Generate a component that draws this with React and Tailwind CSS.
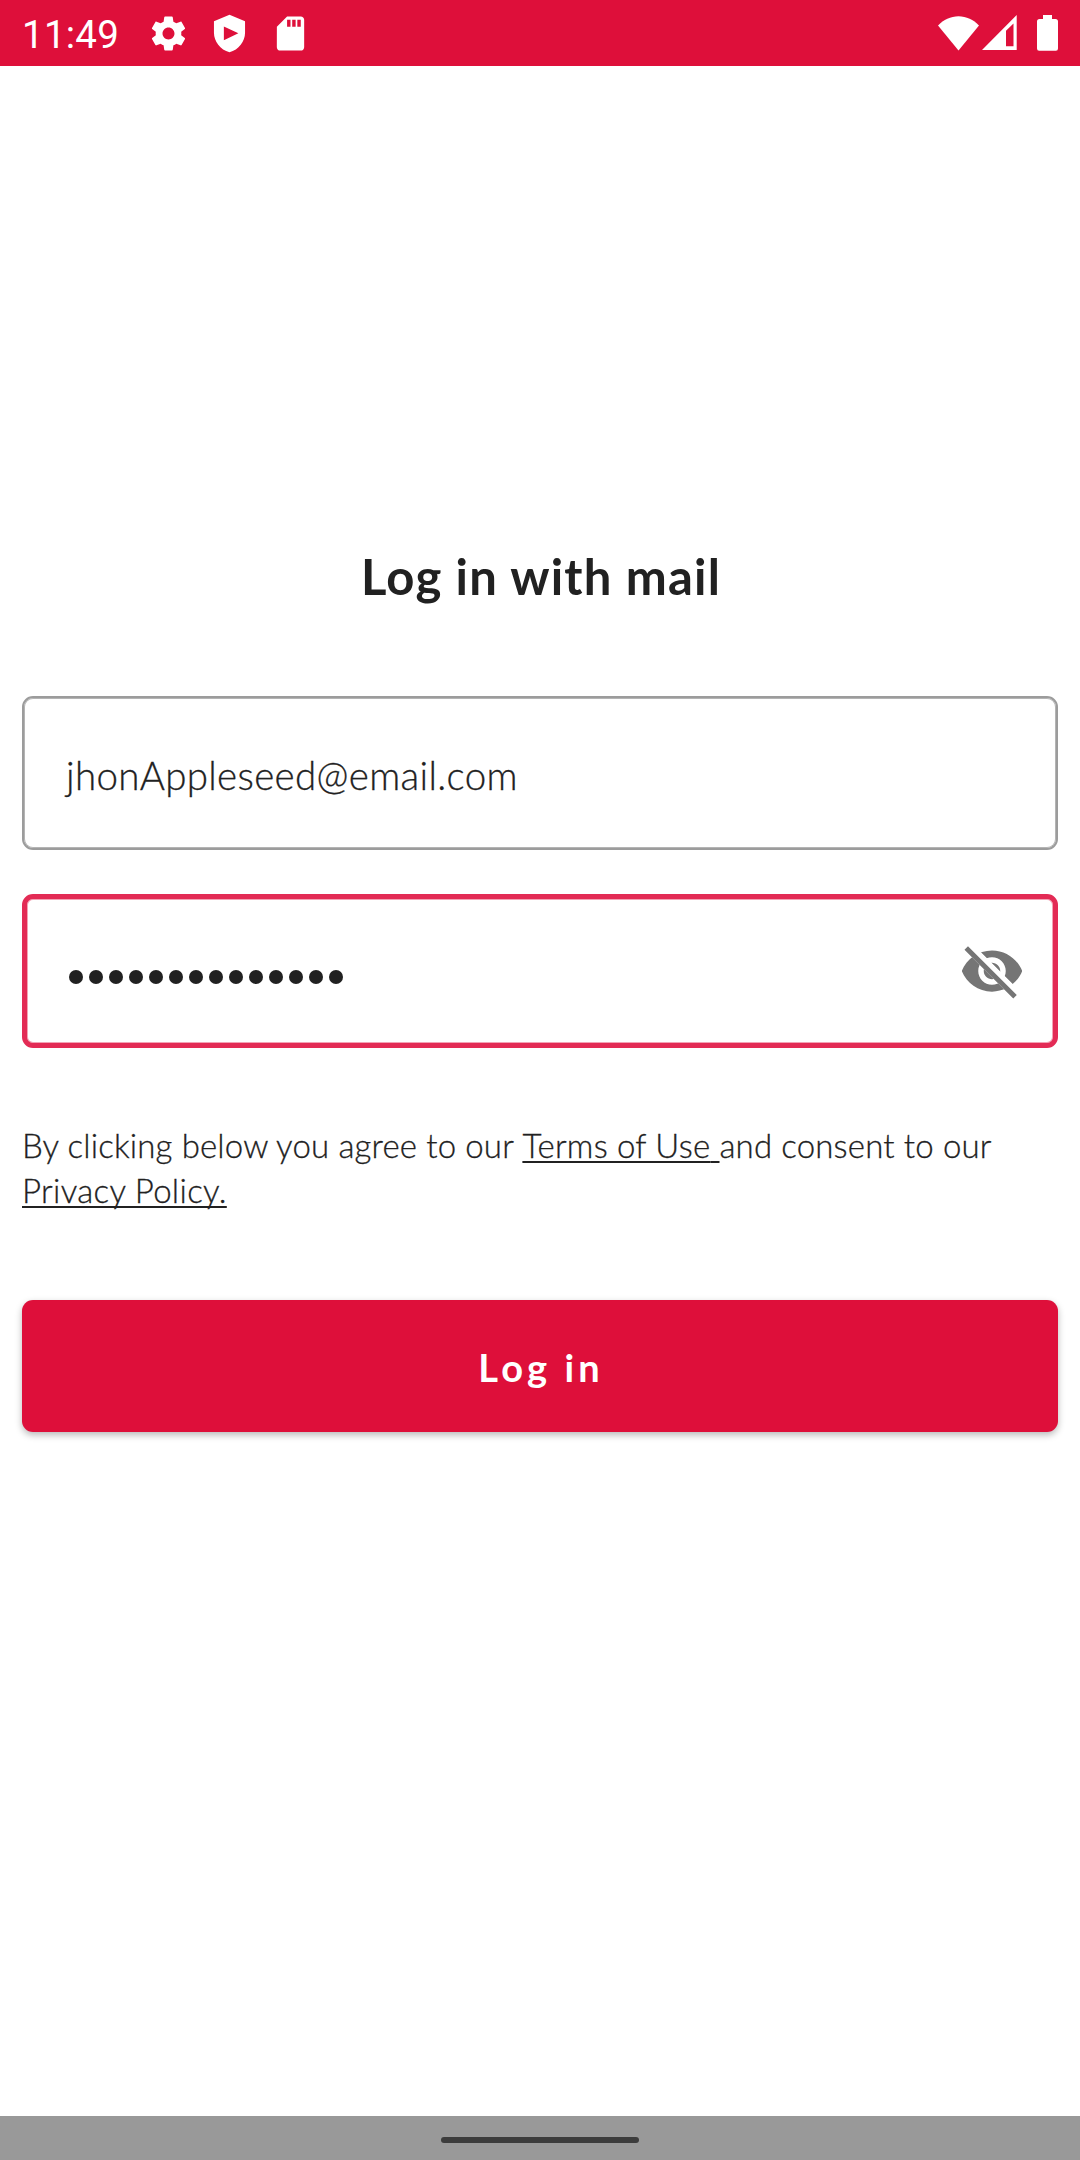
const PASSWORD_LENGTH = 14;

function GearIcon() {
  return (
    <svg className="size-[41px]" viewBox="0 0 24 24" fill="currentColor">
      <path d="M19.43 12.98c.04-.32.07-.64.07-.98s-.03-.66-.07-.98l2.11-1.65c.19-.15.24-.42.12-.64l-2-3.46c-.12-.22-.39-.3-.61-.22l-2.49 1c-.52-.4-1.08-.73-1.69-.98l-.38-2.65C14.46 2.18 14.25 2 14 2h-4c-.25 0-.46.18-.49.42l-.38 2.65c-.61.25-1.17.59-1.69.98l-2.49-1c-.23-.09-.49 0-.61.22l-2 3.46c-.13.22-.07.49.12.64l2.11 1.65c-.04.32-.07.65-.07.98s.03.66.07.98l-2.11 1.65c-.19.15-.24.42-.12.64l2 3.46c.12.22.39.3.61.22l2.49-1c.52.4 1.08.73 1.69.98l.38 2.65c.03.24.24.42.49.42h4c.25 0 .46-.18.49-.42l.38-2.65c.61-.25 1.17-.59 1.69-.98l2.49 1c.23.09.49 0 .61-.22l2-3.46c.12-.22.07-.49-.12-.64l-2.11-1.65zM12 15.5c-1.93 0-3.5-1.57-3.5-3.5s1.57-3.5 3.5-3.5 3.5 1.57 3.5 3.5-1.57 3.5-3.5 3.5z" />
    </svg>
  );
}

function ShieldIcon() {
  return (
    <svg className="size-[41px]" viewBox="0 0 24 24" fill="currentColor" fillRule="evenodd">
      <path d="M12 1 2.9 4.9v6.6c0 5.1 3.7 9.9 9.1 11.5 5.400-1.6 9.100-6.400 9.100-11.500V4.900zM8.700 7.900 17.200 11.900 8.700 16z" />
    </svg>
  );
}

function SdCardIcon() {
  return (
    <svg className="size-[41px]" viewBox="0 0 24 24" fill="currentColor">
      <path d="M18 2h-8L4.020 8 4 20c0 1.100.9 2 2 2h12c1.100 0 2-.9 2-2V4c0-1.100-.9-2-2-2zm-6 6h-2V4h2v4zm3 0h-2V4h2v4zm3 0h-2V4h2v4z" />
    </svg>
  );
}

function WifiIcon() {
  return (
    <svg className="h-[35px] w-[41px]" viewBox="0 0 41 35" fill="currentColor">
      <path d="M20.500 34.500 0 9.500C5.500 3.800 12.700.3 20.500.3S35.500 3.800 41 9.500z" />
    </svg>
  );
}

function SignalIcon() {
  return (
    <svg className="h-[35px] w-[35px]" viewBox="0 0 35 35" fill="currentColor" fillRule="evenodd">
      <path d="M34.700 0v35H0zM31.500 8.500 24 15.800V31.300h7.500z" />
    </svg>
  );
}

function BatteryIcon() {
  return (
    <svg className="h-[36px] w-[21px]" viewBox="0 0 21 36" fill="currentColor">
      <path d="M6 0h9v4h3.500A2.500 2.500 0 0 1 21 6.500v27a2.300 2.300 0 0 1-2.500 2.300h-16A2.300 2.300 0 0 1 0 33.500v-27A2.500 2.500 0 0 1 2.500 4H6z" />
    </svg>
  );
}

function HiddenEyeIcon() {
  return (
    <svg className="size-[66px]" viewBox="0 0 24 24" fill="#757575">
      <clipPath id="eye-clip">
        <path d="M4.540 1H23v18.460h-.73L4.540 1.730zM1 4.270h1L19.730 22v1H1z" />
      </clipPath>
      <path
        clipPath="url(#eye-clip)"
        d="M12 4.500C7 4.500 2.730 7.610 1 12c1.730 4.390 6 7.500 11 7.500s9.270-3.110 11-7.500c-1.730-4.390-6-7.500-11-7.500zM12 17c-2.760 0-5-2.240-5-5s2.240-5 5-5 5 2.240 5 5-2.240 5-5 5zm0-8c-1.660 0-3 1.340-3 3s1.340 3 3 3 3-1.340 3-3-1.340-3-3-3z"
      />
      <path d="M3.270 4.270 19.740 20.740" stroke="#757575" strokeWidth="1.800" strokeLinecap="square" />
    </svg>
  );
}

function StatusBar() {
  return (
    <header className="flex h-[66px] items-center justify-between bg-[#de0f3a] px-[22px] text-white">
      <div className="flex items-center">
        <span className="w-[126px] pt-1 font-[Roboto,sans-serif] text-[38.5px] leading-none tracking-[0.25px]">
          11:49
        </span>
        <div className="flex gap-5 pt-[1px]">
          <GearIcon />
          <ShieldIcon />
          <SdCardIcon />
        </div>
      </div>
      <div className="flex items-center">
        <WifiIcon />
        <span className="-mt-[1px] ml-[3px]">
          <SignalIcon />
        </span>
        <span className="ml-5">
          <BatteryIcon />
        </span>
      </div>
    </header>
  );
}

export default function App() {
  return (
    <div className="flex h-[2160px] w-[1080px] flex-col bg-white font-[Lato,sans-serif] text-[#212121]">
      <StatusBar />

      <main className="flex flex-1 flex-col px-[22px] pt-[481px]">
        <h1 className="h-[60px] pl-[2px] text-center text-[49px] leading-[59px] font-bold tracking-[1.2px]">
          Log in with mail
        </h1>

        <div className="mt-[89px] flex h-[154px] items-center rounded-[11px] border-2 border-[#9c9c9c] pt-[4px] pl-[42px] text-[38.5px] leading-none font-light tracking-[0.33px] shadow-[inset_0_0_0_1px_#b4b4b4] [-webkit-text-stroke:0.3px_#212121]">
          jhonAppleseed@email.com
        </div>

        <div className="mt-11 flex h-[154px] items-center justify-between rounded-[11px] border-[5px] border-[#e32b55] pr-7 pl-[42px] shadow-[inset_0_0_0_1px_#f3a3b5]">
          <div className="flex gap-[6px] pt-3">
            {Array.from({ length: PASSWORD_LENGTH }, (_, i) => (
              <span key={i} className="size-[14px] rounded-full bg-[#212121]" />
            ))}
          </div>
          <HiddenEyeIcon />
        </div>

        <p className="mt-[75px] text-[33px] leading-[45px] font-light tracking-[0.15px] [-webkit-text-stroke:0.3px_#212121]">
          By clicking below you agree to our{" "}
          <a className="tracking-[0.2px] underline decoration-2 underline-offset-[3px] [text-decoration-skip-ink:none]">
            Terms of Use{" "}
          </a>
          and consent to our
          <br />
          <a className="tracking-[0.32px] underline decoration-2 underline-offset-[3px] [text-decoration-skip-ink:none]">
            Privacy Policy.
          </a>
        </p>

        <button className="mt-[87px] h-[132px] rounded-[11px] bg-[#de0f3a] pt-[2px] pl-[2px] text-[38px] leading-none font-bold tracking-[4.1px] text-white shadow-[0_3px_7px_rgba(0,0,0,0.28)]">
          Log in
        </button>
      </main>

      <footer className="flex h-[44px] items-center justify-center bg-[#999999]">
        <div className="mt-[4px] h-[6px] w-[198px] rounded-full bg-[#3d3d3d]" />
      </footer>
    </div>
  );
}
